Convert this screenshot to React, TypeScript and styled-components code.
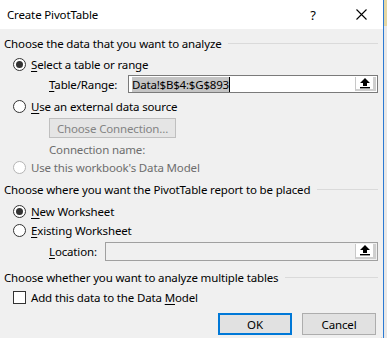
import React from 'react';
import styled, { createGlobalStyle } from 'styled-components';

const GlobalStyle = createGlobalStyle`
  html, body {
    margin: 0;
    padding: 0;
    background: #ebebeb;
  }
  body {
    font-family: 'Noto Sans', 'Open Sans', Arial, sans-serif;
    font-size: 11.5px;
    color: #000;
  }
`;

const Page = styled.div`
  display: flex;
  width: 387px;
  height: 338px;
  overflow: hidden;
  background: linear-gradient(#e4d7a4 0 26px, #e8e8e8 26px);
`;

const Dialog = styled.div`
  width: 383px;
  height: 338px;
  border-right: 1px solid #2b7ad3;
  background: #f0f0f0;
  display: flex;
  flex-direction: column;
  position: relative;
`;

const TitleBar = styled.div`
  height: 29px;
  background: #fff;
  display: flex;
  align-items: center;
  padding-left: 7px;
`;

const TitleText = styled.div`
  flex: 1;
  font-size: 11.5px;
  letter-spacing: -0.15px;
`;

const HelpMark = styled.div`
  width: 12px;
  font-size: 13px;
  margin-right: 36px;
  text-align: center;
`;

const CloseMark = styled.div`
  width: 12px;
  height: 12px;
  margin-right: 16px;
  display: flex;
  align-items: center;
  justify-content: center;
`;

const Body = styled.div`
  display: flex;
  flex-direction: column;
  padding: 0 5px 0 4px;
`;

const Row = styled.div<{ $mt: number; $ml?: number; $h?: number }>`
  display: flex;
  align-items: center;
  height: ${({ $h }) => $h ?? 18}px;
  margin-top: ${({ $mt }) => $mt}px;
  margin-left: ${({ $ml }) => $ml ?? 0}px;
`;

const SectionTitle = styled.span`
  white-space: nowrap;
  letter-spacing: -0.15px;
`;

const SectionLine = styled.div`
  flex: 1;
  height: 1px;
  background: #dadada;
  margin-left: 7px;
`;

const RadioCircle = styled.span<{ $checked?: boolean; $disabled?: boolean }>`
  box-sizing: border-box;
  width: 13px;
  height: 13px;
  border-radius: 50%;
  border: 1px solid ${({ $disabled }) => ($disabled ? '#b5b5b5' : '#333')};
  background: #fff;
  margin-left: 9px;
  margin-right: 5px;
  display: flex;
  align-items: center;
  justify-content: center;
  &::after {
    content: '';
    display: ${({ $checked }) => ($checked ? 'block' : 'none')};
    width: 7px;
    height: 7px;
    border-radius: 50%;
    background: #333;
  }
`;

const CheckBox = styled.span`
  box-sizing: border-box;
  width: 13px;
  height: 13px;
  border: 1px solid #333;
  background: #fff;
  margin-left: 9px;
  margin-right: 5px;
`;

const Label = styled.span<{ $disabled?: boolean }>`
  color: ${({ $disabled }) => ($disabled ? '#6d6d6d' : '#000')};
  white-space: nowrap;
  letter-spacing: -0.15px;
  u {
    text-decoration: underline;
    text-underline-offset: 2px;
  }
`;

const FieldLabel = styled(Label)<{ $w: number }>`
  width: ${({ $w }) => $w}px;
`;

const RefBox = styled.div<{ $disabled?: boolean }>`
  box-sizing: border-box;
  flex: 1;
  height: 100%;
  border: 1px solid ${({ $disabled }) => ($disabled ? '#a0a0a0' : '#7a7a7a')};
  background: ${({ $disabled }) => ($disabled ? '#f0f0f0' : '#fff')};
  display: flex;
  align-items: stretch;
  padding: 1px;
`;

const RefInput = styled.div<{ $disabled?: boolean }>`
  flex: 1;
  display: flex;
  align-items: center;
  padding-left: 2px;
  background: ${({ $disabled }) => ($disabled ? '#f0f0f0' : '#fff')};
`;

const Selected = styled.span`
  background: #c4c4c4;
  line-height: 15px;
  letter-spacing: -0.2px;
`;

const Caret = styled.span`
  width: 1px;
  height: 15px;
  background: #000;
`;

const RefButton = styled.div`
  box-sizing: border-box;
  width: 21px;
  background: #fff;
  border-left: 1px solid #c8c8c8;
  border-right: 3px solid #cfcfcf;
  border-bottom: 2px solid #cfcfcf;
  display: flex;
  align-items: center;
  justify-content: center;
`;

const PushButton = styled.div<{ $default?: boolean; $disabled?: boolean }>`
  box-sizing: border-box;
  width: 74px;
  height: 22px;
  background: ${({ $disabled }) => ($disabled ? '#e5e5e5' : '#e1e1e1')};
  border: ${({ $default, $disabled }) =>
    $default ? '2px solid #0078d7' : `1px solid ${$disabled ? '#bfbfbf' : '#adadad'}`};
  color: ${({ $disabled }) => ($disabled ? '#838383' : '#000')};
  display: flex;
  align-items: center;
  justify-content: center;
  letter-spacing: -0.15px;
`;

const ConnectButton = styled(PushButton)`
  width: 127px;
  height: 20px;
`;

const ButtonBar = styled.div`
  display: flex;
  justify-content: flex-end;
  gap: 10px;
  margin-top: 7px;
  padding-right: 2px;
`;

const Grip = styled.div`
  position: absolute;
  right: 1px;
  bottom: 1px;
  width: 6px;
  height: 6px;
`;

const UpArrow = () => (
  <svg width="10" height="11" viewBox="0 0 10 11">
    <path d="M5 0 L10 5 L7 5 L7 8 L3 8 L3 5 L0 5 Z" fill="#000" />
    <rect x="0" y="9" width="10" height="1.4" fill="#000" />
  </svg>
);

const Radio = ({ checked, disabled, children }: { checked?: boolean; disabled?: boolean; children: React.ReactNode }) => (
  <>
    <RadioCircle $checked={checked} $disabled={disabled} />
    <Label $disabled={disabled}>{children}</Label>
  </>
);

const Section = ({ mt, title }: { mt: number; title: string }) => (
  <Row $mt={mt} $h={16}>
    <SectionTitle>{title}</SectionTitle>
    <SectionLine />
  </Row>
);

export default function App() {
  return (
    <Page>
      <GlobalStyle />
      <Dialog>
        <TitleBar>
          <TitleText>Create PivotTable</TitleText>
          <HelpMark>?</HelpMark>
          <CloseMark>
            <svg width="11" height="11" viewBox="0 0 11 11">
              <path d="M0.5 0.5 L10.5 10.5 M10.5 0.5 L0.5 10.5" stroke="#000" strokeWidth="1.1" />
            </svg>
          </CloseMark>
        </TitleBar>
        <Body>
          <Section mt={6} title="Choose the data that you want to analyze" />
          <Row $mt={4}>
            <Radio checked>
              <u>S</u>elect a table or range
            </Radio>
          </Row>
          <Row $mt={2} $ml={45}>
            <FieldLabel $w={79}>
              <u>T</u>able/Range:
            </FieldLabel>
            <RefBox>
              <RefInput>
                <Selected>Data!$B$4:$G$893</Selected>
                <Caret />
              </RefInput>
              <RefButton>
                <UpArrow />
              </RefButton>
            </RefBox>
          </Row>
          <Row $mt={4}>
            <Radio>
              <u>U</u>se an external data source
            </Radio>
          </Row>
          <Row $mt={3} $ml={45} $h={20}>
            <ConnectButton $disabled>Choose Connection...</ConnectButton>
          </Row>
          <Row $mt={3} $ml={45} $h={16}>
            <Label $disabled>Connection name:</Label>
          </Row>
          <Row $mt={1}>
            <Radio disabled>Use this workbook's Data Model</Radio>
          </Row>
          <Section mt={5} title="Choose where you want the PivotTable report to be placed" />
          <Row $mt={5}>
            <Radio checked>
              <u>N</u>ew Worksheet
            </Radio>
          </Row>
          <Row $mt={1}>
            <Radio>
              <u>E</u>xisting Worksheet
            </Radio>
          </Row>
          <Row $mt={3} $ml={45} $h={19}>
            <FieldLabel $w={56}>
              <u>L</u>ocation:
            </FieldLabel>
            <RefBox $disabled>
              <RefInput $disabled />
              <RefButton>
                <UpArrow />
              </RefButton>
            </RefBox>
          </Row>
          <Section mt={8} title="Choose whether you want to analyze multiple tables" />
          <Row $mt={3}>
            <CheckBox />
            <Label>
              Add this data to the Data <u>M</u>odel
            </Label>
          </Row>
          <ButtonBar>
            <PushButton $default>OK</PushButton>
            <PushButton>Cancel</PushButton>
          </ButtonBar>
        </Body>
        <Grip>
          <svg width="6" height="6" viewBox="0 0 6 6">
            <path d="M6 0 L6 6 L0 6 Z" fill="#b8b8b8" />
          </svg>
        </Grip>
      </Dialog>
    </Page>
  );
}
